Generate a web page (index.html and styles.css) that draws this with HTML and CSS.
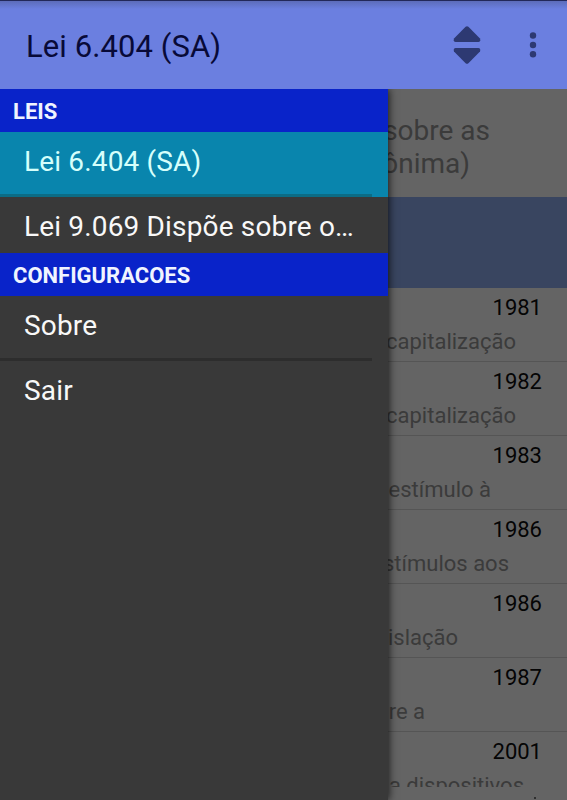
FILE: index.html
```html
<!DOCTYPE html>
<html lang="pt-BR">
<head>
  <meta charset="UTF-8">
  <title>Lei 6.404 (SA)</title>
  <link rel="stylesheet" href="styles.css">
</head>
<body>

<header class="action-bar">
  <h1>Lei 6.404 (SA)</h1>
  <svg class="icon-sort" width="28" height="38" viewBox="0 0 28 38">
    <path d="M12.6 .8Q14 -.4 15.4 .8L27 12.6Q28 16 25.5 16H2.5Q0 16 1 12.6Z"/>
    <path d="M12.6 37.2Q14 38.4 15.4 37.2L27 25.4Q28 22 25.5 22H2.5Q0 22 1 25.4Z"/>
  </svg>
  <svg class="icon-more" width="8" height="26" viewBox="0 0 8 26">
    <circle cx="4" cy="3.5" r="3.2"/>
    <circle cx="4" cy="13" r="3.2"/>
    <circle cx="4" cy="22.3" r="3.2"/>
  </svg>
</header>

<div class="main">
  <nav class="drawer">
    <h2>LEIS</h2>
    <a class="item selected">Lei 6.404 (SA)</a>
    <a class="item short">Lei 9.069 Dispõe sobre o…</a>
    <h2>CONFIGURACOES</h2>
    <a class="item divided">Sobre</a>
    <a class="item">Sair</a>
  </nav>

  <section class="content">
    <div class="intro">
      <p>sobre as</p>
      <p class="line2">ônima)</p>
    </div>
    <div class="banner"></div>
    <ul class="list">
      <li><b>1981</b><p>capitalização</p></li>
      <li><b>1982</b><p>capitalização</p></li>
      <li><b>1983</b><p class="r4">estímulo à</p></li>
      <li><b>1986</b><p class="r1">stímulos aos</p></li>
      <li><b>1986</b><p class="r5">islação</p></li>
      <li><b>1987</b><p class="r6">re a</p></li>
      <li><b>2001</b><p class="r2">a dispositivos</p></li>
    </ul>
    <div class="bottom"><i></i></div>
  </section>
</div>

</body>
</html>
```

FILE: styles.css
```css
* {
  box-sizing: border-box;
  margin: 0;
  padding: 0;
}
body {
  width: 567px;
  height: 800px;
  overflow: hidden;
  font-family: Roboto, sans-serif;
  background: #646464;
}
.action-bar {
  height: 89px;
  border-top: 1px solid #22285a;
  background: linear-gradient(#5c6cba, #6b7fe0 8px);
  display: flex;
  align-items: center;
  padding: 0 30px 1px 26px;
}
.action-bar h1 {
  flex: 1;
  font-size: 31px;
  font-weight: 400;
  color: #080a38;
  letter-spacing: 0.08px;
  padding-top: 3px;
}
.action-bar svg {
  fill: #2d3972;
}
.icon-more {
  margin-left: 48px;
}
.main {
  display: flex;
  height: 711px;
  overflow: hidden;
}
.drawer {
  width: 388px;
  flex: none;
  background: #393939;
  z-index: 1;
  box-shadow: 1px 0 8px rgba(0,0,0,0.75);
}
.drawer h2 {
  height: 43px;
  padding-left: 13px;
  background: #0923c9;
  color: #f0f4ff;
  font-size: 22px;
  font-weight: 700;
  line-height: 45px;
}
.item {
  display: block;
  height: 65px;
  padding-left: 24px;
  color: #f8f8f8;
  font-size: 28px;
  letter-spacing: 0.16px;
  line-height: 60px;
  white-space: nowrap;
}
.selected {
  color: #d5fffb;
  background: linear-gradient(#0c6c85, #0c6c85) 0 100% / 372px 3px no-repeat #0985ad;
}
.short {
  height: 56px;
}
.divided {
  background: linear-gradient(#2d2d2d, #2d2d2d) 0 100% / 372px 3px no-repeat;
}
/* slides under the drawer edge */
.content {
  width: 187px;
  margin-left: -8px;
  overflow: hidden;
  white-space: nowrap;
  color: #3b3b3b;
}
.intro {
  height: 108px;
  padding: 25px 77px 0 0;
  font-size: 28px;
  line-height: 33px;
  text-align: right;
}
.line2 {
  padding-right: 20px;
}
.banner {
  height: 91px;
  background: #394560;
}
.list {
  list-style: none;
  height: 499px;
  overflow: hidden;
}
.list li {
  height: 74px;
  border-bottom: 1px solid #555;
  text-align: right;
}
.list b {
  display: block;
  height: 37px;
  padding-right: 25px;
  color: #050505;
  font-size: 22px;
  font-weight: 400;
  line-height: 40px;
}
.list p {
  padding-right: 51px;
  font-size: 22px;
  line-height: 34px;
}
.list .r1 {
  padding-right: 58px;
}
.list .r2 {
  padding-right: 43px;
}
.list .r4 {
  padding-right: 76px;
}
.list .r5 {
  padding-right: 109px;
}
.list .r6 {
  padding-right: 142px;
}
.bottom {
  padding: 10px 31px 0 0;
}
.bottom i {
  display: block;
  width: 2px;
  height: 2px;
  margin-left: auto;
  background: #303030;
}
```
